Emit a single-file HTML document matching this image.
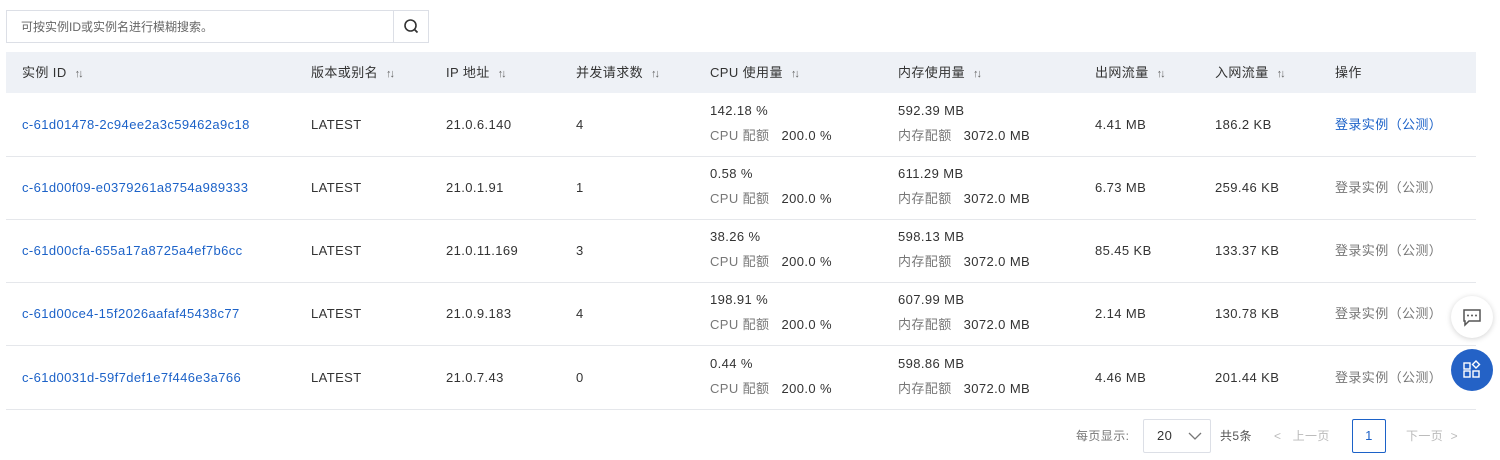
<!DOCTYPE html>
<html><head><meta charset="utf-8"><style>
*{box-sizing:border-box;margin:0;padding:0}
body{width:1500px;height:460px;background:#fff;font-family:"Liberation Sans","Noto Sans CJK SC",sans-serif;font-size:13px;color:#333;position:relative;overflow:hidden;line-height:16px}
.search{position:absolute;left:6px;top:10px;width:423px;height:33px;border:1px solid #dcdfe6;}
.search span{position:absolute;left:14px;top:8px;color:#666;font-size:12px}
.search .btn{position:absolute;right:0;top:0;width:35px;height:31px;border-left:1px solid #dcdfe6}
.hdr{position:absolute;left:6px;top:52px;width:1470px;height:41px;background:#eef1f6}
.row{position:absolute;left:6px;width:1470px;border-bottom:1px solid #e5e7eb}
.c{position:absolute;white-space:nowrap;letter-spacing:0.4px;line-height:16px}
.link{color:#1c62c8}
.g{color:#777}
.sort{font-size:11px;color:#666;margin-left:8px;letter-spacing:-2px}
.fab{position:absolute;left:1451px;width:42px;height:42px;border-radius:50%}
</style></head><body>
<div class="search"><span>可按实例ID或实例名进行模糊搜索。</span><div class="btn"><svg width="35" height="31"><circle cx="16.5" cy="14.5" r="5.5" fill="none" stroke="#333" stroke-width="1.6"/><line x1="20.5" y1="18.5" x2="23.5" y2="21.5" stroke="#333" stroke-width="1.8"/></svg></div></div>
<div class="hdr">
<div class="c" style="left:16px;top:13px">实例 ID<span class="sort">↑↓</span></div>
<div class="c" style="left:305px;top:13px">版本或别名<span class="sort">↑↓</span></div>
<div class="c" style="left:440px;top:13px">IP 地址<span class="sort">↑↓</span></div>
<div class="c" style="left:570px;top:13px">并发请求数<span class="sort">↑↓</span></div>
<div class="c" style="left:704px;top:13px">CPU 使用量<span class="sort">↑↓</span></div>
<div class="c" style="left:892px;top:13px">内存使用量<span class="sort">↑↓</span></div>
<div class="c" style="left:1089px;top:13px">出网流量<span class="sort">↑↓</span></div>
<div class="c" style="left:1209px;top:13px">入网流量<span class="sort">↑↓</span></div>
<div class="c" style="left:1329px;top:13px">操作</div>
</div>
<div class="row" style="top:93px;height:64px">
<div class="c link" style="left:16px;top:24px">c-61d01478-2c94ee2a3c59462a9c18</div>
<div class="c" style="left:305px;top:24px">LATEST</div><div class="c" style="left:440px;top:24px">21.0.6.140</div><div class="c" style="left:570px;top:24px">4</div>
<div class="c" style="left:704px;top:10px">142.18 %</div><div class="c" style="left:704px;top:35px"><span class="g">CPU 配额</span>&nbsp;&nbsp; 200.0 %</div>
<div class="c" style="left:892px;top:10px">592.39 MB</div><div class="c" style="left:892px;top:35px"><span class="g">内存配额</span>&nbsp;&nbsp; 3072.0 MB</div>
<div class="c" style="left:1089px;top:24px">4.41 MB</div><div class="c" style="left:1209px;top:24px">186.2 KB</div>
<div class="c link" style="left:1329px;top:24px">登录实例（公测）</div></div>
<div class="row" style="top:157px;height:63px">
<div class="c link" style="left:16px;top:23px">c-61d00f09-e0379261a8754a989333</div>
<div class="c" style="left:305px;top:23px">LATEST</div><div class="c" style="left:440px;top:23px">21.0.1.91</div><div class="c" style="left:570px;top:23px">1</div>
<div class="c" style="left:704px;top:9px">0.58 %</div><div class="c" style="left:704px;top:34px"><span class="g">CPU 配额</span>&nbsp;&nbsp; 200.0 %</div>
<div class="c" style="left:892px;top:9px">611.29 MB</div><div class="c" style="left:892px;top:34px"><span class="g">内存配额</span>&nbsp;&nbsp; 3072.0 MB</div>
<div class="c" style="left:1089px;top:23px">6.73 MB</div><div class="c" style="left:1209px;top:23px">259.46 KB</div>
<div class="c g" style="left:1329px;top:23px">登录实例（公测）</div></div>
<div class="row" style="top:220px;height:63px">
<div class="c link" style="left:16px;top:23px">c-61d00cfa-655a17a8725a4ef7b6cc</div>
<div class="c" style="left:305px;top:23px">LATEST</div><div class="c" style="left:440px;top:23px">21.0.11.169</div><div class="c" style="left:570px;top:23px">3</div>
<div class="c" style="left:704px;top:9px">38.26 %</div><div class="c" style="left:704px;top:34px"><span class="g">CPU 配额</span>&nbsp;&nbsp; 200.0 %</div>
<div class="c" style="left:892px;top:9px">598.13 MB</div><div class="c" style="left:892px;top:34px"><span class="g">内存配额</span>&nbsp;&nbsp; 3072.0 MB</div>
<div class="c" style="left:1089px;top:23px">85.45 KB</div><div class="c" style="left:1209px;top:23px">133.37 KB</div>
<div class="c g" style="left:1329px;top:23px">登录实例（公测）</div></div>
<div class="row" style="top:283px;height:63px">
<div class="c link" style="left:16px;top:23px">c-61d00ce4-15f2026aafaf45438c77</div>
<div class="c" style="left:305px;top:23px">LATEST</div><div class="c" style="left:440px;top:23px">21.0.9.183</div><div class="c" style="left:570px;top:23px">4</div>
<div class="c" style="left:704px;top:9px">198.91 %</div><div class="c" style="left:704px;top:34px"><span class="g">CPU 配额</span>&nbsp;&nbsp; 200.0 %</div>
<div class="c" style="left:892px;top:9px">607.99 MB</div><div class="c" style="left:892px;top:34px"><span class="g">内存配额</span>&nbsp;&nbsp; 3072.0 MB</div>
<div class="c" style="left:1089px;top:23px">2.14 MB</div><div class="c" style="left:1209px;top:23px">130.78 KB</div>
<div class="c g" style="left:1329px;top:23px">登录实例（公测）</div></div>
<div class="row" style="top:346px;height:64px">
<div class="c link" style="left:16px;top:24px">c-61d0031d-59f7def1e7f446e3a766</div>
<div class="c" style="left:305px;top:24px">LATEST</div><div class="c" style="left:440px;top:24px">21.0.7.43</div><div class="c" style="left:570px;top:24px">0</div>
<div class="c" style="left:704px;top:10px">0.44 %</div><div class="c" style="left:704px;top:35px"><span class="g">CPU 配额</span>&nbsp;&nbsp; 200.0 %</div>
<div class="c" style="left:892px;top:10px">598.86 MB</div><div class="c" style="left:892px;top:35px"><span class="g">内存配额</span>&nbsp;&nbsp; 3072.0 MB</div>
<div class="c" style="left:1089px;top:24px">4.46 MB</div><div class="c" style="left:1209px;top:24px">201.44 KB</div>
<div class="c g" style="left:1329px;top:24px">登录实例（公测）</div></div>
<div class="c g" style="left:1076px;top:428px;font-size:12px">每页显示:</div>
<div class="c" style="left:1143px;top:419px;width:68px;height:34px;border:1px solid #dcdfe6;border-radius:2px"><span style="position:absolute;left:13px;top:8px">20</span><svg style="position:absolute;left:44px;top:12px" width="14" height="9"><path d="M1 1l6 6 6-6" fill="none" stroke="#777" stroke-width="1.3"/></svg></div>
<div class="c" style="left:1220px;top:428px;font-size:12px;color:#555">共5条</div>
<div class="c" style="left:1274px;top:428px;color:#bbb;font-size:12px">&lt;&nbsp;&nbsp; 上一页</div>
<div class="c" style="left:1352px;top:419px;width:34px;height:34px;border:1px solid #1c62c8;border-radius:2px;color:#1c62c8;text-align:center;line-height:32px">1</div>
<div class="c" style="left:1406px;top:428px;color:#bbb;font-size:12px">下一页 &nbsp;&gt;</div>
<div class="fab" style="top:296px;background:#fff;box-shadow:0 1px 6px rgba(0,0,0,.18)"><svg width="42" height="42"><path d="M13 14h16v11h-11l-4 4v-4h-1z" fill="none" stroke="#555" stroke-width="1.5"/><circle cx="17" cy="19.5" r="1" fill="#555"/><circle cx="21" cy="19.5" r="1" fill="#555"/><circle cx="25" cy="19.5" r="1" fill="#555"/></svg></div>
<div class="fab" style="top:349px;background:#2462c6"><svg width="42" height="42"><g fill="none" stroke="#fff" stroke-width="1.4"><rect x="13" y="14" width="6" height="6"/><rect x="13" y="22" width="6" height="6"/><rect x="22" y="22" width="6" height="6"/><path d="M25 12l3.5 3.5-3.5 3.5-3.5-3.5z"/></g></svg></div>
</body></html>
